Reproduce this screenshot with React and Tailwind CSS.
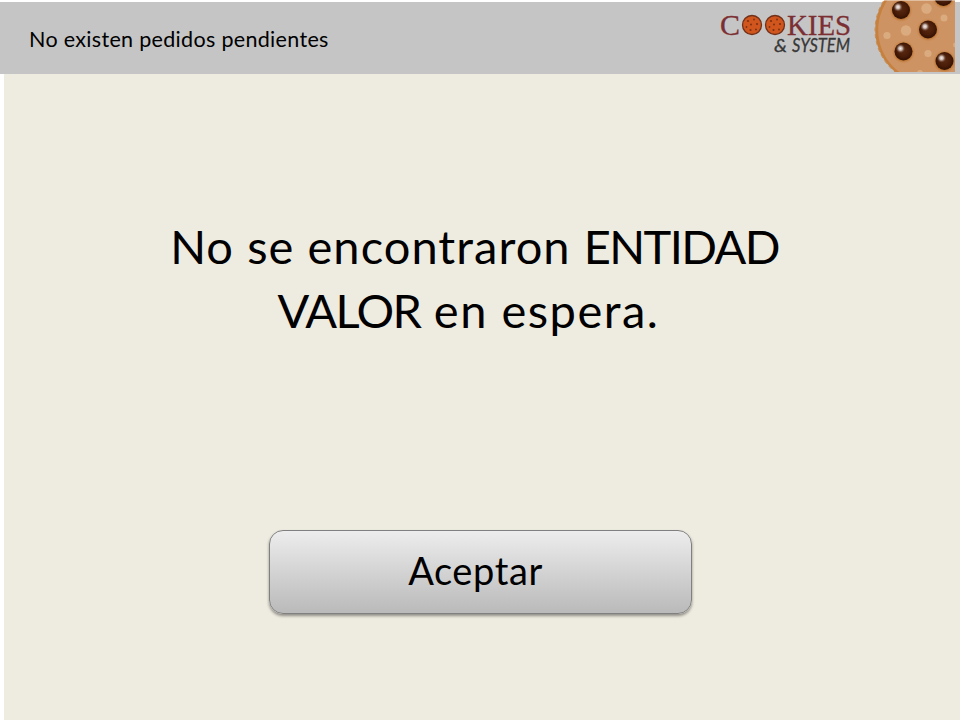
const CHIPS = [
  [41, 10, 9],
  [83.5, -3, 9],
  [68, 29.5, 9],
  [43.5, 51.5, 9],
  [84.5, 61, 9],
];

const SPOTS = [
  [66.5, 8.5, 5.2],
  [84, 18, 3.5],
  [46, 30.5, 5.2],
  [27, 35.5, 3.6],
  [68, 53.5, 3.6],
  [60, 73, 3],
  [95.5, 45, 2.5],
];

function Cookie() {
  return (
    <svg className="block h-[72px] w-[85px] shrink-0" viewBox="10 0 85 72">
      <defs>
        <radialGradient id="chip" cx="0.5" cy="0.45" r="0.55">
          <stop offset="0" stopColor="#5a2a12" />
          <stop offset="0.6" stopColor="#4a1d08" />
          <stop offset="1" stopColor="#301002" />
        </radialGradient>
        <radialGradient id="shine">
          <stop offset="0" stopColor="#f5efec" />
          <stop offset="0.4" stopColor="#c8b5ac" />
          <stop offset="1" stopColor="#6a4230" stopOpacity="0" />
        </radialGradient>
        <radialGradient id="halo">
          <stop offset="0.75" stopColor="#c07a3a" />
          <stop offset="1" stopColor="#cc9160" stopOpacity="0" />
        </radialGradient>
      </defs>
      <circle cx="69" cy="30" r="53.8" fill="#c7813f" />
      <circle cx="69" cy="30" r="54" fill="none" stroke="#c7813f" strokeWidth="0.8" strokeDasharray="4 3" />
      <circle cx="70.5" cy="30" r="52.3" fill="#ce9362" />
      {SPOTS.map(([x, y, r]) => (
        <circle key={`${x}-${y}`} cx={x} cy={y} r={r} fill="#dbab80" />
      ))}
      {CHIPS.map(([x, y, r]) => (
        <g key={`${x}-${y}`}>
          <circle cx={x} cy={y + 0.5} r={r + 3} fill="url(#halo)" />
          <circle cx={x} cy={y} r={r} fill="url(#chip)" />
          <circle cx={x - 3} cy={y - 3} r="4.8" fill="url(#shine)" />
        </g>
      ))}
      <rect x="10" width="85" height="1" fill="#fff" opacity="0.4" />
    </svg>
  );
}

function MiniCookie({ x }) {
  return (
    <g transform={`translate(${x} 25)`}>
      <circle r="9.5" fill="#d0561e" stroke="#713018" strokeWidth="1.3" />
      <g fill="#7e3012">
        <circle cx="-4" cy="-4" r="1.1" />
        <circle cx="2" cy="-5.5" r="0.9" />
        <circle cx="5" cy="-1" r="1.1" />
        <circle cx="-1" cy="-0.5" r="1" />
        <circle cx="-5.5" cy="2" r="0.9" />
        <circle cx="-1.5" cy="5" r="1.1" />
        <circle cx="4" cy="4.5" r="1" />
      </g>
    </g>
  );
}

function Logo() {
  return (
    <svg className="mr-[10px] block h-[72px] w-[150px] shrink-0" viewBox="710 0 150 72">
      <g fill="#7b2f32" stroke="#7b2f32" strokeWidth="0.3" fontFamily="Liberation Serif, serif" fontSize="30">
        <text x="720" y="35" textLength="20" lengthAdjust="spacingAndGlyphs">C</text>
        <text x="787" y="35" textLength="64" lengthAdjust="spacingAndGlyphs">KIES</text>
      </g>
      <MiniCookie x={752} />
      <MiniCookie x={775} />
      <g fill="#383838" stroke="#383838" strokeWidth="0.3" fontFamily="Lato, sans-serif" fontStyle="italic">
        <text x="774" y="51.5" fontSize="18" textLength="13" lengthAdjust="spacingAndGlyphs">&amp;</text>
        <text x="792" y="51.5" fontSize="19" textLength="58" lengthAdjust="spacingAndGlyphs">SYSTEM</text>
      </g>
    </svg>
  );
}

export default function App() {
  return (
    <div className="flex h-[720px] w-[960px] flex-col overflow-hidden bg-white font-[Lato,sans-serif] text-black">
      <header className="flex h-[74px] shrink-0 items-start border-t-2 border-white bg-[#c5c5c5] pl-[29px] pr-[5px]">
        <h1 className="mt-[22px] flex-1 whitespace-nowrap text-[21.5px] leading-[30px] tracking-[0.32px]">No existen pedidos pendientes</h1>
        <div className="-mt-[2px] flex">
          <Logo />
          <Cookie />
        </div>
      </header>
      <main className="ml-1 flex flex-1 flex-col items-center bg-[#eeebe0]">
        <p className="mt-[140px] flex flex-col items-center whitespace-nowrap text-[47px] leading-[64px]">
          <span className="mr-[15px]">
            <span className="tracking-[1.05px]">No se encontraron </span>
            <span className="tracking-[-1.6px]">ENTIDAD</span>
          </span>
          <span className="mr-[27px]">
            <span className="tracking-[-1.6px]">VALOR</span>
            <span className="tracking-[1.5px]"> en espera.</span>
          </span>
        </p>
        <button className="mr-[3px] mt-[188px] h-[84px] w-[423px] rounded-[14px] border border-[#808080] bg-linear-to-b from-[#ededed] to-[#bababa] pb-[3px] pr-[10px] text-[38px] tracking-[0.6px] shadow-[0_2px_3px_rgba(0,0,0,0.4)]">
          Aceptar
        </button>
      </main>
    </div>
  );
}
